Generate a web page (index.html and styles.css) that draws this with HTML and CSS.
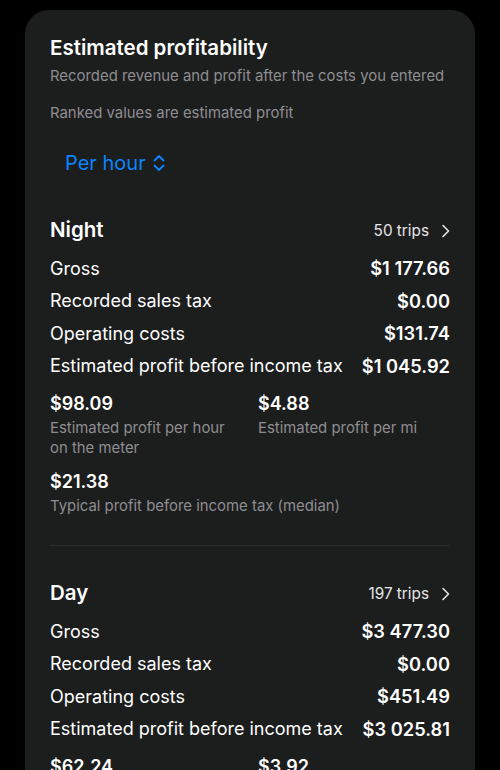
FILE: index.html
```html
<!DOCTYPE html>
<html lang="en">
<head>
    <meta charset="utf-8"/>
    <title>Estimated profitability</title>
    <link rel="stylesheet" href="styles.css">
</head>
<body>
    <div class="card">
        <h2 class="title">Estimated profitability</h2>
        <p class="subtitle">Recorded revenue and profit after the costs you entered</p>
        <p class="note">Ranked values are estimated profit</p>

        <button class="picker">Per hour
            <svg width="12" height="18" viewBox="0 0 12 18" fill="none" stroke="currentColor" stroke-width="1.8" stroke-linecap="round" stroke-linejoin="round">
                <polyline points="1.5,6.5 6,2 10.5,6.5"/>
                <polyline points="1.5,11.5 6,16 10.5,11.5"/>
            </svg>
        </button>

        <div class="group">
            <div class="group-head">
                <h3>Night</h3>
                <span class="trips">50 trips
                    <svg width="9" height="14" viewBox="0 0 9 14" fill="none" stroke="currentColor" stroke-width="1.6" stroke-linecap="round" stroke-linejoin="round">
                        <polyline points="2,1.5 7.5,7 2,12.5"/>
                    </svg>
                </span>
            </div>
            <div class="row"><span>Gross</span><b>$1 177.66</b></div>
            <div class="row"><span>Recorded sales tax</span><b>$0.00</b></div>
            <div class="row"><span>Operating costs</span><b>$131.74</b></div>
            <div class="row"><span>Estimated profit before income tax</span><b>$1 045.92</b></div>
            <div class="stats">
                <div class="stat">
                    <div class="stat-value">$98.09</div>
                    <div class="stat-label">Estimated profit per hour on the meter</div>
                </div>
                <div class="stat">
                    <div class="stat-value">$4.88</div>
                    <div class="stat-label">Estimated profit per mi</div>
                </div>
                <div class="stat">
                    <div class="stat-value">$21.38</div>
                    <div class="stat-label">Typical profit before income tax (median)</div>
                </div>
            </div>
        </div>

        <hr class="divider">

        <div class="group">
            <div class="group-head">
                <h3>Day</h3>
                <span class="trips">197 trips
                    <svg width="9" height="14" viewBox="0 0 9 14" fill="none" stroke="currentColor" stroke-width="1.6" stroke-linecap="round" stroke-linejoin="round">
                        <polyline points="2,1.5 7.5,7 2,12.5"/>
                    </svg>
                </span>
            </div>
            <div class="row"><span>Gross</span><b>$3 477.30</b></div>
            <div class="row"><span>Recorded sales tax</span><b>$0.00</b></div>
            <div class="row"><span>Operating costs</span><b>$451.49</b></div>
            <div class="row"><span>Estimated profit before income tax</span><b>$3 025.81</b></div>
            <div class="stats">
                <div class="stat">
                    <div class="stat-value">$62.24</div>
                    <div class="stat-label">Estimated profit per hour on the meter</div>
                </div>
                <div class="stat">
                    <div class="stat-value">$3.92</div>
                    <div class="stat-label">Estimated profit per mi</div>
                </div>
            </div>
        </div>
    </div>
</body>
</html>
```

FILE: styles.css
```css
*{
    margin: 0;
    padding: 0;
    box-sizing: border-box;
}
body{
    background: #000;
    color: #fff;
    font-family: Inter, "Noto Sans", sans-serif;
    height: 770px;
    overflow: hidden;
}
.card{
    margin: 10px 25px 0;
    padding: 25px 25px 40px;
    background: #1c1d1d;
    border-radius: 24px;
}
.title{
    font-size: 20.5px;
    font-weight: 600;
    line-height: 26px;
}
.subtitle, .note{
    font-size: 14.9px;
    line-height: 20px;
    color: #8e8e91;
}
.subtitle{
    margin-top: 5px;
}
.note{
    margin-top: 17px;
}
.picker{
    display: flex;
    align-items: center;
    gap: 7px;
    margin: 27px 0 0 15px;
    background: none;
    border: none;
    color: #0a84ff;
    font-family: inherit;
    font-size: 20px;
    line-height: 26px;
}
.group-head{
    display: flex;
    justify-content: space-between;
    align-items: center;
    height: 26px;
    margin-top: 40px;
    margin-bottom: 10px;
}
.group-head h3{
    font-size: 20.5px;
    font-weight: 600;
}
.trips{
    display: flex;
    align-items: center;
    gap: 12px;
    font-size: 15.3px;
    color: #e6e6e6;
    padding-top: 3px;
}
.row{
    display: flex;
    justify-content: space-between;
    align-items: center;
    height: 32.5px;
    font-size: 18px;
}
.row b{
    font-weight: 600;
    font-size: 18.3px;
}
.stats{
    display: grid;
    grid-template-columns: 208px 1fr;
    row-gap: 13px;
    margin-top: 11px;
}
.stat-value{
    font-size: 18px;
    font-weight: 600;
    line-height: 22px;
    margin-bottom: 3px;
}
.stat-label{
    font-size: 14.9px;
    line-height: 20px;
    color: #8e8e91;
    padding-right: 20px;
}
.stat:nth-child(3){
    grid-column: 1 / 3;
}
.divider{
    border: none;
    border-top: 1px solid #2a2b2b;
    margin-top: 29px;
}
.divider + .group .group-head{
    margin-top: 33px;
}
```
